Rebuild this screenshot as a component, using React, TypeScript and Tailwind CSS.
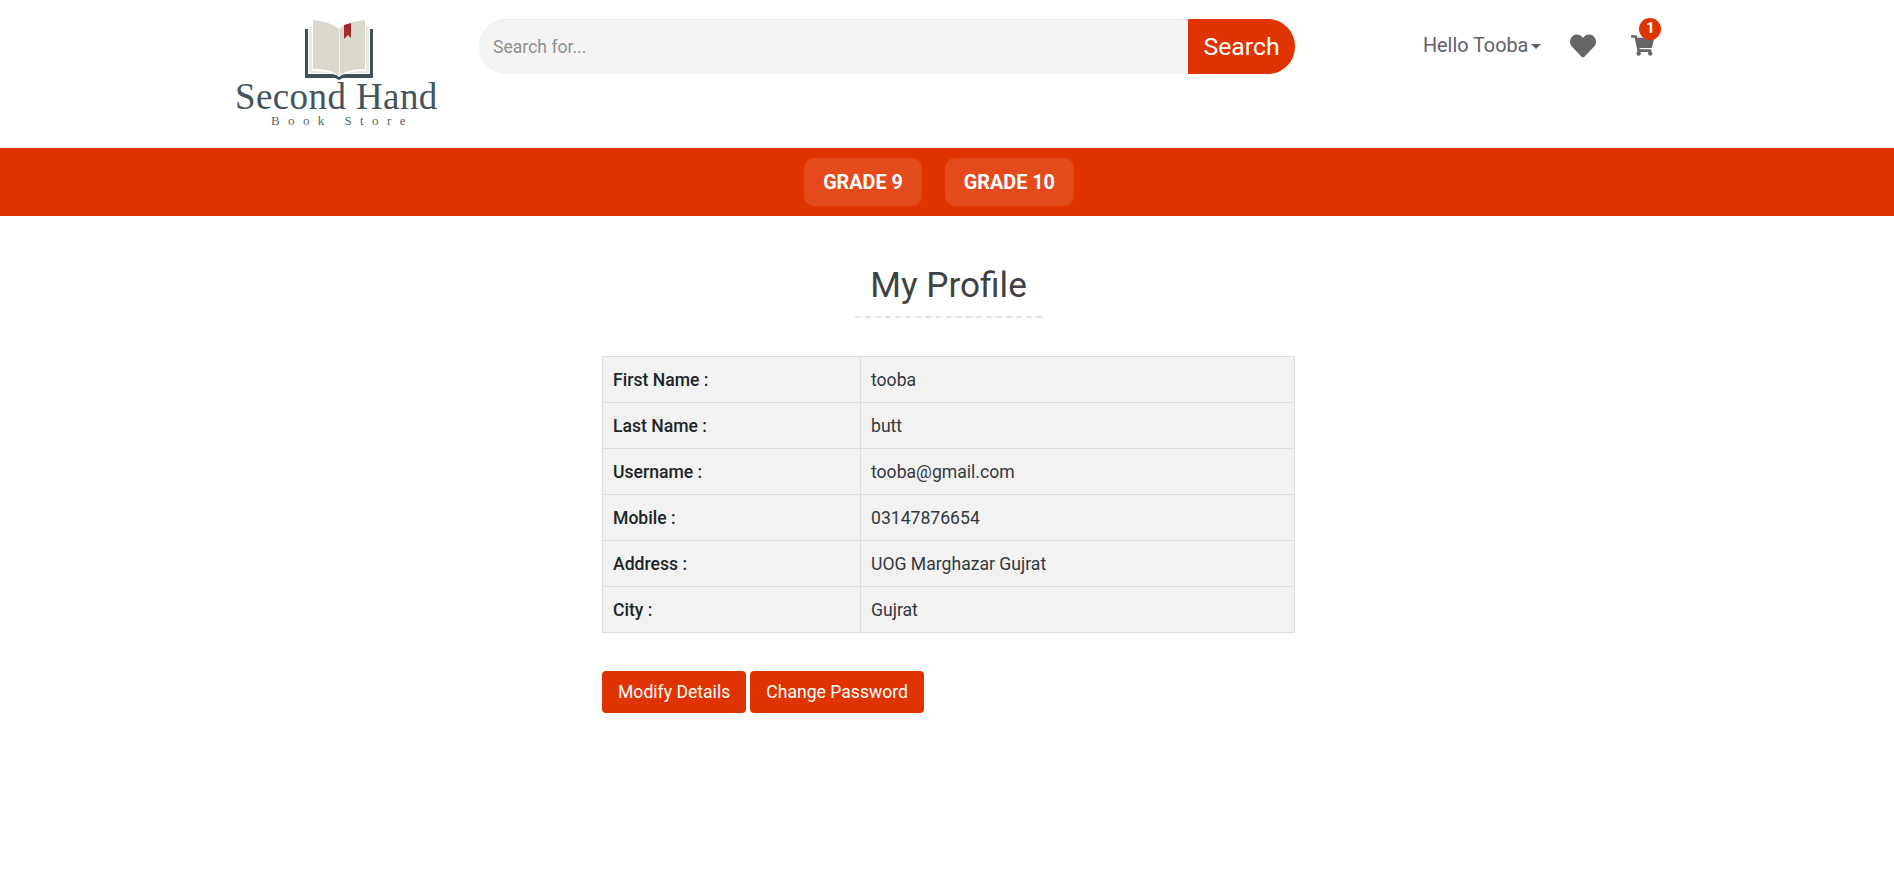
import { FaHeart, FaShoppingCart } from 'react-icons/fa'

const PROFILE = [
  { label: 'First Name :', value: 'tooba' },
  { label: 'Last Name :', value: 'butt' },
  { label: 'Username :', value: 'tooba@gmail.com' },
  { label: 'Mobile :', value: '03147876654' },
  { label: 'Address :', value: 'UOG Marghazar Gujrat' },
  { label: 'City :', value: 'Gujrat' },
]

function Logo() {
  return (
    <div className="w-[244px] h-[148px] flex-shrink-0 flex flex-col items-start">
      <svg viewBox="0 0 68 62" className="w-[68px] h-[62px] ml-[70px] mt-[19px]">
        <path d="M0 10h3v45h23c4 0 7 1 8 3 1-2 4-3 8-3h23V10h3v49H38l-4 2-4-2H0z" fill="#3f5059" />
        <path d="M4 7h3v45c11 0 21 1 27 6 6-5 16-6 27-6V7h3v47H40c-3 0-5 1-6 3-1-2-3-3-6-3H4z" fill="#ece9e0" />
        <path d="M8 1c11 1 20 4 26 9v46c-6-4-15-6-26-6z" fill="#dcd8cd" />
        <path d="M60 1c-11 1-20 4-26 9v46c6-4 15-6 26-6z" fill="#dcd8cd" />
        <path d="M34 10h1v46h-1z" fill="#f3f1ea" />
        <path d="M39 6l7-2v15l-3-3-4 4z" fill="#a52a2a" />
      </svg>
      <div className="font-['Liberation_Serif',serif] text-[37px] leading-[30px] mt-[1px] tracking-[0.4px] text-[#44545c] whitespace-nowrap">Second Hand</div>
      <div className="font-['Liberation_Serif',serif] text-[13px] leading-[14px] mt-[2px] ml-[36px] tracking-[8.4px] text-[#55636a] whitespace-nowrap">Book Store</div>
    </div>
  )
}

export default function App() {
  return (
    <div className="min-h-[875px] bg-white font-['Roboto',sans-serif] text-[#212529]">
      <header className="h-[148px] flex items-start pl-[235px]">
        <Logo />
        <div className="flex w-[816px] h-[55px] mt-[19px]">
          <input
            placeholder="Search for..."
            className="flex-1 min-w-0 h-full pl-[14px] bg-[#f4f4f4] border-t border-[#e8e8e8] rounded-l-[27px] text-[17.6px] outline-none placeholder:text-[#8f8f8f]"
          />
          <button className="w-[107px] h-full bg-[#e03400] text-white text-[24.75px] rounded-r-[27px]">Search</button>
        </div>
        <div className="flex items-center h-[55px] mt-[18px] ml-[128px] text-[#5f6268]">
          <span className="text-[19.8px]">Hello Tooba</span>
          <span className="ml-[3px] mt-[2px] border-x-[5px] border-x-transparent border-t-[5px] border-t-[#5f6268]" />
          <FaHeart className="ml-[29px] text-[26px] text-[#666666]" />
          <span className="relative ml-[35px]">
            <FaShoppingCart className="text-[23px] text-[#666666]" />
            <span className="absolute -top-[16px] left-[8px] w-[22px] h-[22px] rounded-full bg-[#e03400] text-white text-[15.4px] font-bold flex items-center justify-center">1</span>
          </span>
        </div>
      </header>

      <nav className="h-[68px] bg-[#e03400] flex items-center justify-center gap-[23px] pr-[16px]">
        {['GRADE 9', 'GRADE 10'].map(g => (
          <a key={g} className="h-[48px] pt-[1px] px-[19px] rounded-[10px] bg-[#e34a1c] text-white text-[19.8px] font-bold flex items-center">{g}</a>
        ))}
      </nav>

      <main className="w-[693px] ml-[602px]">
        <div className="flex flex-col items-center">
          <h1 className="mt-[45px] text-[35.2px] leading-[48px] text-[#3f4245]">My Profile</h1>
          <div className="w-[187px] mt-[7px] border-t-2 border-dashed border-[#e4e4e4]" />
        </div>
        <table className="w-full mt-[38px] border-collapse text-[17.6px] bg-[#f2f2f2]">
          <tbody>
            {PROFILE.map(row => (
              <tr key={row.label}>
                <td className="w-[258px] h-[46px] pt-[1px] px-[10px] border border-[#dddddd] font-medium">{row.label}</td>
                <td className="h-[46px] pt-[1px] px-[10px] border border-[#dddddd] text-[#33383d]">{row.value}</td>
              </tr>
            ))}
          </tbody>
        </table>
        <div className="flex gap-[4px] mt-[38px]">
          {['Modify Details', 'Change Password'].map(b => (
            <button key={b} className="h-[42px] px-[16px] pt-[1px] rounded-[4px] bg-[#e03400] text-white text-[17.6px]">{b}</button>
          ))}
        </div>
      </main>
    </div>
  )
}
